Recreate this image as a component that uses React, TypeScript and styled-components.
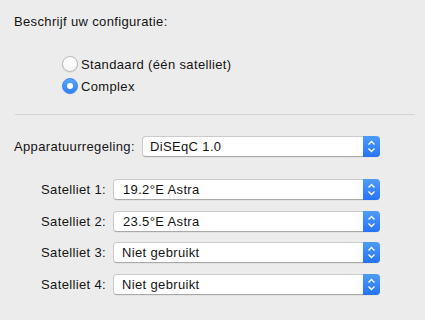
import { Fragment } from "react";
import styled, { createGlobalStyle } from "styled-components";

const GlobalStyle = createGlobalStyle`
  html, body {
    margin: 0;
    padding: 0;
    background: #ececec;
  }
  body {
    font-family: "Liberation Sans", Arial, sans-serif;
    font-size: 13px;
    letter-spacing: 0.35px;
    color: #141414;
  }
`;

const Pane = styled.div`
  width: 425px;
  height: 320px;
  box-sizing: border-box;
  padding: 14px 10px 0 14px;
  display: flex;
  flex-direction: column;
`;

const Heading = styled.div`
  line-height: 16px;
`;

const RadioGroup = styled.div`
  margin: 23px 0 0 48px;
  display: flex;
  flex-direction: column;
`;

const RadioRow = styled.label`
  height: 22px;
  display: flex;
  align-items: center;
  gap: 3px;
`;

const RadioCircle = styled.span<{ $checked?: boolean }>`
  width: 16px;
  height: 16px;
  box-sizing: border-box;
  border-radius: 50%;
  display: flex;
  align-items: center;
  justify-content: center;
  background: ${(p) =>
    p.$checked ? "linear-gradient(#5aa5fb, #2d7ff6)" : "linear-gradient(#ffffff, #f6f6f6)"};
  border: 1px solid ${(p) => (p.$checked ? "#3a86f2" : "#b9b9b9")};
  box-shadow: 0 0.5px 1px rgba(0, 0, 0, 0.12);

  &::after {
    content: "";
    display: ${(p) => (p.$checked ? "block" : "none")};
    width: 6px;
    height: 6px;
    border-radius: 50%;
    background: #ffffff;
  }
`;

const Separator = styled.hr`
  margin: 17px 0 0 1px;
  width: 400px;
  height: 1px;
  border: none;
  background: #d3d3d3;
`;

const ControlRow = styled.div`
  margin-top: 21px;
  display: flex;
  align-items: center;
`;

const ControlLabel = styled.span`
  width: 128px;
`;

const SatGrid = styled.div`
  margin-top: 22px;
  display: grid;
  grid-template-columns: 92px 267px;
  column-gap: 7px;
  row-gap: 10.7px;
  align-items: center;
`;

const SatLabel = styled.span`
  text-align: right;
  white-space: nowrap;
`;

const Popup = styled.div<{ $width: number }>`
  width: ${(p) => p.$width}px;
  height: 21px;
  box-sizing: border-box;
  display: flex;
  background: #ffffff;
  border-radius: 4px;
  border: 1px solid #cbcbcb;
  border-bottom-color: #a9a9a9;
  box-shadow: 0 0.5px 0.5px rgba(0, 0, 0, 0.08);
`;

const PopupText = styled.span<{ $indent: number }>`
  flex: 1;
  padding-left: ${(p) => p.$indent}px;
  line-height: 19px;
  white-space: nowrap;
`;

const Stepper = styled.span`
  width: 17px;
  margin: -1px -1px -1px 0;
  border-radius: 0 4px 4px 0;
  background: linear-gradient(#4c9cfc, #2674f5);
  display: flex;
  align-items: center;
  justify-content: center;
`;

function Chevrons() {
  return (
    <svg width="9" height="13" viewBox="0 0 9 13">
      <path
        d="M1.5 4.5 L4.5 1.5 L7.5 4.5 M1.5 8.5 L4.5 11.5 L7.5 8.5"
        fill="none"
        stroke="#ffffff"
        strokeWidth="1.4"
      />
    </svg>
  );
}

function PopupButton({
  value,
  width,
  indent,
}: {
  value: string;
  width: number;
  indent: number;
}) {
  return (
    <Popup $width={width}>
      <PopupText $indent={indent}>{value}</PopupText>
      <Stepper>
        <Chevrons />
      </Stepper>
    </Popup>
  );
}

const satellites = [
  { label: "Satelliet 1:", value: "19.2°E Astra", indent: 9 },
  { label: "Satelliet 2:", value: "23.5°E Astra", indent: 9 },
  { label: "Satelliet 3:", value: "Niet gebruikt", indent: 8 },
  { label: "Satelliet 4:", value: "Niet gebruikt", indent: 8 },
];

export default function App() {
  return (
    <>
      <GlobalStyle />
      <Pane>
        <Heading>Beschrijf uw configuratie:</Heading>
        <RadioGroup>
          <RadioRow>
            <RadioCircle />
            Standaard (één satelliet)
          </RadioRow>
          <RadioRow>
            <RadioCircle $checked />
            Complex
          </RadioRow>
        </RadioGroup>
        <Separator />
        <ControlRow>
          <ControlLabel>Apparatuurregeling:</ControlLabel>
          <PopupButton value="DiSEqC 1.0" width={238} indent={7} />
        </ControlRow>
        <SatGrid>
          {satellites.map((s) => (
            <Fragment key={s.label}>
              <SatLabel>{s.label}</SatLabel>
              <PopupButton value={s.value} width={267} indent={s.indent} />
            </Fragment>
          ))}
        </SatGrid>
      </Pane>
    </>
  );
}
